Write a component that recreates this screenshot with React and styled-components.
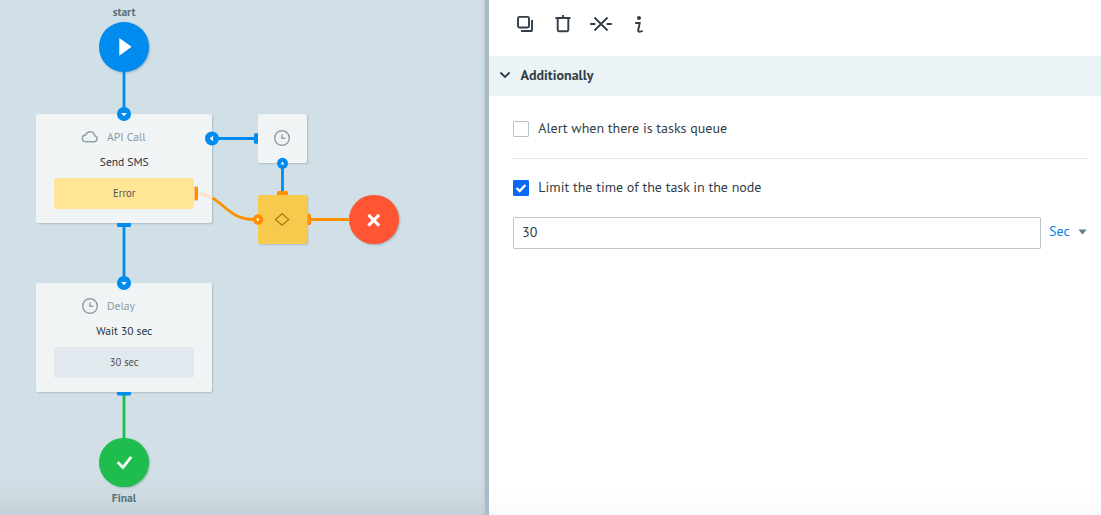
import React from "react";
import styled, { createGlobalStyle } from "styled-components";

const GlobalStyle = createGlobalStyle`
  *, *::before, *::after { box-sizing: border-box; }
  body {
    margin: 0;
    background: #fff;
    font-family: "PT Sans", "Noto Sans", "Open Sans", sans-serif;
    color: #333d47;
  }
`;

const c = {
  blue: "#008bef",
  orange: "#ff8f00",
  green: "#1ebd4d",
  red: "#ff5532",
  icon: "#333d47",
  muted: "#8d9ba8",
};

const Page = styled.div`
  display: flex;
  width: 100%;
  height: 515px;
  overflow: hidden;
`;

const Canvas = styled.section`
  position: relative;
  flex: 0 0 489px;
  border-right: 4px solid #a9bbc4;
  background: linear-gradient(to left, rgba(130, 155, 168, 0.14), transparent 5px),
    linear-gradient(to top, rgba(90, 90, 90, 0.11), rgba(90, 90, 90, 0.04) 16px, transparent 38px), #d1dfe6;
`;

const Layer = styled.svg`
  position: absolute;
  inset: 0;
  width: 485px;
  height: 515px;
`;

const Card = styled.div`
  position: absolute;
  left: 36px;
  top: ${(p) => p.$top}px;
  width: 176px;
  height: 109px;
  padding: 14px 17.6px 0 18px;
  border-radius: 2px;
  background: #f0f4f5;
  box-shadow: 1px 1px 2px rgba(70, 100, 110, 0.28);
  display: flex;
  flex-direction: column;
`;

const CardHead = styled.div`
  display: flex;
  align-items: center;
  gap: 8.5px;
  height: 18px;
  padding-left: 26.5px;
  color: ${c.muted};
`;

const Label = styled.span`
  font-size: ${(p) => p.$size}px;
  font-weight: ${(p) => p.$weight || 400};
  line-height: 18px;
  white-space: nowrap;
`;

const CardTitle = styled(Label)`
  margin-top: 7px;
  text-align: center;
  color: #2b333b;
`;

const Badge = styled.div`
  display: flex;
  align-items: center;
  justify-content: center;
  height: 31px;
  margin-top: 7px;
  padding-bottom: 1px;
  border-radius: 2px;
  background: ${(p) => p.$bg};
  color: #505050;
`;

const Tile = styled.div`
  position: absolute;
  left: 258px;
  top: ${(p) => p.$top}px;
  width: 49.4px;
  height: 49px;
  display: flex;
  align-items: center;
  justify-content: center;
  padding: 0 2px 1px 0;
  border-radius: 2px;
  background: ${(p) => p.$bg};
  box-shadow: 1px 1px 2px rgba(70, 100, 110, 0.28);
`;

const Round = styled.div`
  position: absolute;
  left: ${(p) => p.$left}px;
  top: ${(p) => p.$top}px;
  width: 49.5px;
  height: 49.5px;
  border-radius: 50%;
  background: ${(p) => p.$bg};
  box-shadow: 1px 1px 2px rgba(70, 100, 110, 0.35);
  svg { display: block; }
`;

const Caption = styled(Label)`
  position: absolute;
  left: 74px;
  top: ${(p) => p.$top}px;
  width: 100px;
  text-align: center;
  color: #58717b;
`;

const Panel = styled.section`
  flex: 1;
  min-width: 0;
  background: linear-gradient(to top, rgba(90, 90, 90, 0.04), transparent 22px), #fff;
`;

const Toolbar = styled.div`
  display: flex;
  align-items: center;
  gap: 14px;
  height: 56px;
  padding: 0 24px 8px;
  color: ${c.icon};
  svg { display: block; }
`;

const SectionHead = styled.div`
  display: flex;
  align-items: center;
  gap: 9.5px;
  height: 40px;
  padding: 0 10px 2px;
  background: #ebf3f6;
`;

const Body = styled.div`
  padding: 18px 14px 0 24px;
`;

const CheckRow = styled.label`
  display: flex;
  align-items: center;
  gap: 9.3px;
  height: 30px;
`;

const RowLabel = styled(Label)`
  padding-bottom: 2px;
`;

const Box = styled.span`
  display: flex;
  flex: none;
  width: 16px;
  height: 16px;
  border-radius: 1px;
  border: 1px solid ${(p) => (p.$on ? "#0b69f5" : "#b5c3ca")};
  background: ${(p) => (p.$on ? "#0b69f5" : "#fff")};
`;

const Divider = styled.div`
  height: 1px;
  margin: 14px 0;
  background: #dce8ed;
`;

const FieldRow = styled.div`
  display: flex;
  align-items: center;
  margin-top: 14px;
`;

const Field = styled.div`
  display: flex;
  align-items: center;
  width: 528px;
  height: 32px;
  padding: 0 8px 1px;
  border: 1px solid #b9c6cb;
  border-radius: 1px;
`;

const Unit = styled.div`
  display: flex;
  align-items: center;
  gap: 8px;
  margin-left: 8px;
  padding-bottom: 3px;
  color: #0a80e8;
`;

const Clock = () => (
  <svg width="18" height="18" viewBox="0 0 18 18" fill="none" stroke="#8fa0ac" strokeWidth="1.5">
    <circle cx="9" cy="9" r="7.3" />
    <path d="M9 5.4V9.3H12.3" />
  </svg>
);

const Cloud = () => (
  <svg width="18" height="18" viewBox="0 0 18 18" fill="none" stroke="#8fa0ac" strokeWidth="1.5" strokeLinejoin="round">
    <path d="M4.700 13.700H13.100A3.050 3.050 0 0 0 13.700 7.700C13.200 5.300 11.400 3.800 9.100 3.800C7 3.800 5.300 5.100 4.700 7A3.350 3.350 0 0 0 4.700 13.700Z" />
  </svg>
);

const Port = ({ x, y, r, color, turn }) => (
  <g transform={`translate(${x} ${y}) rotate(${turn})`}>
    <circle r={r} fill={color} />
    <path d={r > 6 ? "M-2.8 -1.100H2.8L0 2.300Z" : "M-1.900 -1.200H1.900L0 1.700Z"} fill="#fff" />
  </g>
);

export default function App() {
  return (
    <Page>
      <GlobalStyle />
      <Canvas>
        <Caption $top={3} $size={11.4} $weight={700}>start</Caption>
        <Round $left={99.2} $top={22.2} $bg={c.blue}>
          <svg width="50" height="50"><path d="M20.300 15.900L32.600 24.800L20.300 33.700Z" fill="#fff" /></svg>
        </Round>

        <Card $top={114}>
          <CardHead><Cloud /><Label $size={11.6}>API Call</Label></CardHead>
          <CardTitle $size={11.5}>Send SMS</CardTitle>
          <Badge $bg="#ffe595"><Label $size={10.6}>Error</Label></Badge>
        </Card>
        <Card $top={283}>
          <CardHead><Clock /><Label $size={11.6}>Delay</Label></CardHead>
          <CardTitle $size={11.5}>Wait 30 sec</CardTitle>
          <Badge $bg="#e1e9ee"><Label $size={10.6}>30 sec</Label></Badge>
        </Card>

        <Tile $top={114} $bg="#f0f4f5"><Clock /></Tile>
        <Tile $top={195} $bg="#f7c94c">
          <svg width="18" height="18" viewBox="0 0 18 18" fill="none" stroke="#ae8419" strokeWidth="1.500" strokeLinejoin="round">
            <path d="M9.100 3.800L15.700 9.500L9.100 15.200L2.500 9.500Z" />
          </svg>
        </Tile>

        <Round $left={349.3} $top={194.7} $bg={c.red}>
          <svg width="50" height="50"><path d="M19.400 19.900L30.100 30.600M30.100 19.900L19.400 30.600" stroke="#fff" strokeWidth="3" /></svg>
        </Round>
        <Round $left={99.2} $top={437.7} $bg={c.green}>
          <svg width="50" height="50"><path d="M18.700 24.300L23.900 29.500L32.200 18.900" fill="none" stroke="#fff" strokeWidth="2.800" /></svg>
        </Round>
        <Caption $top={489} $size={11.5} $weight={700}>Final</Caption>

        <Layer fill="none" strokeWidth="2.800">
          <path d="M124 71V110M124 226V279M218 138.500H255M282.500 166V192" stroke={c.blue} />
          <path d="M124 395V439" stroke={c.green} />
          <path d="M198 194C203 194 208 195.500 212.500 198" stroke="#ffe3c2" />
          <path d="M212.500 198C225 205 232 219.500 254 219.500M310 219.500H350" stroke={c.orange} />
          <path d="M117 223H131V225.500Q131 227 129.500 227H118.500Q117 227 117 225.500Z" fill={c.blue} />
          <path d="M117 392H131V394Q131 395.500 129.500 395.500H118.500Q117 395.500 117 394Z" fill={c.blue} />
          <path d="M258 133.200H255.500Q254 133.200 254 134.700V142.300Q254 143.800 255.500 143.800H258Z" fill={c.blue} />
          <path d="M277 195V192.500Q277 191 278.500 191H286.500Q288 191 288 192.500V195Z" fill={c.orange} />
          <path d="M307.500 214H309.500Q311 214 311 215.500V223.500Q311 225 309.500 225H307.500Z" fill={c.orange} />
          <path d="M194.500 186.500H197Q198 186.500 198 187.500V199.500Q198 200.500 197 200.500H194.500Z" fill={c.orange} />
          <Port x={124} y={114} r={7} color={c.blue} turn={0} />
          <Port x={124} y={283} r={7} color={c.blue} turn={0} />
          <Port x={212} y={138.5} r={7} color={c.blue} turn={90} />
          <Port x={282.5} y={163.3} r={5.5} color={c.blue} turn={180} />
          <Port x={258} y={219.5} r={5.2} color={c.orange} turn={-90} />
        </Layer>
      </Canvas>

      <Panel>
        <Toolbar>
          <svg width="24" height="24" viewBox="0 0 24 24" fill="none" stroke="currentColor" strokeWidth="1.900">
            <rect x="5" y="4.900" width="11" height="10.600" rx="1.500" />
            <path d="M19 8V18.300Q19 19 18.300 19H8" />
          </svg>
          <svg width="24" height="24" viewBox="0 0 24 24" fill="none" stroke="currentColor" strokeWidth="1.900">
            <path d="M4.500 6H19.500M12 3V6M6.700 6V18Q6.700 19.200 7.900 19.200H16.100Q17.300 19.200 17.300 18V6" />
          </svg>
          <svg width="24" height="24" viewBox="0 0 24 24" fill="none" stroke="currentColor" strokeWidth="1.800">
            <path d="M1.200 12H6.400M17.600 12H22.800M5.500 5.500L18.500 18.500M18.500 5.500L5.500 18.500" />
          </svg>
          <svg width="24" height="24" viewBox="0 0 24 24" fill="none" stroke="currentColor" strokeWidth="1.900">
            <circle cx="12" cy="6" r="2" fill="currentColor" stroke="none" />
            <path d="M8.200 11H12.700L11.200 18.200Q11 19.800 12.500 19.800Q14.200 19.800 15.700 18.800" />
          </svg>
        </Toolbar>
        <SectionHead>
          <svg width="12" height="12" viewBox="0 0 12 12" fill="none" stroke={c.icon} strokeWidth="1.800">
            <path d="M1.400 3.500L6 7.900L10.600 3.500" />
          </svg>
          <Label $size={14} $weight={700}>Additionally</Label>
        </SectionHead>
        <Body>
          <CheckRow>
            <Box />
            <RowLabel $size={14}>Alert when there is tasks queue</RowLabel>
          </CheckRow>
          <Divider />
          <CheckRow>
            <Box $on>
              <svg width="14" height="14" viewBox="0 0 14 14" fill="none" stroke="#fff" strokeWidth="2.400">
                <path d="M2.600 7L5.700 10.100L11.400 4" />
              </svg>
            </Box>
            <RowLabel $size={14}>Limit the time of the task in the node</RowLabel>
          </CheckRow>
          <FieldRow>
            <Field><RowLabel $size={14}>30</RowLabel></Field>
            <Unit>
              <RowLabel $size={14}>Sec</RowLabel>
              <svg width="9" height="6"><path d="M0.300 0.500H8.700L4.500 5.500Z" fill="#5f7f8b" /></svg>
            </Unit>
          </FieldRow>
        </Body>
      </Panel>
    </Page>
  );
}
